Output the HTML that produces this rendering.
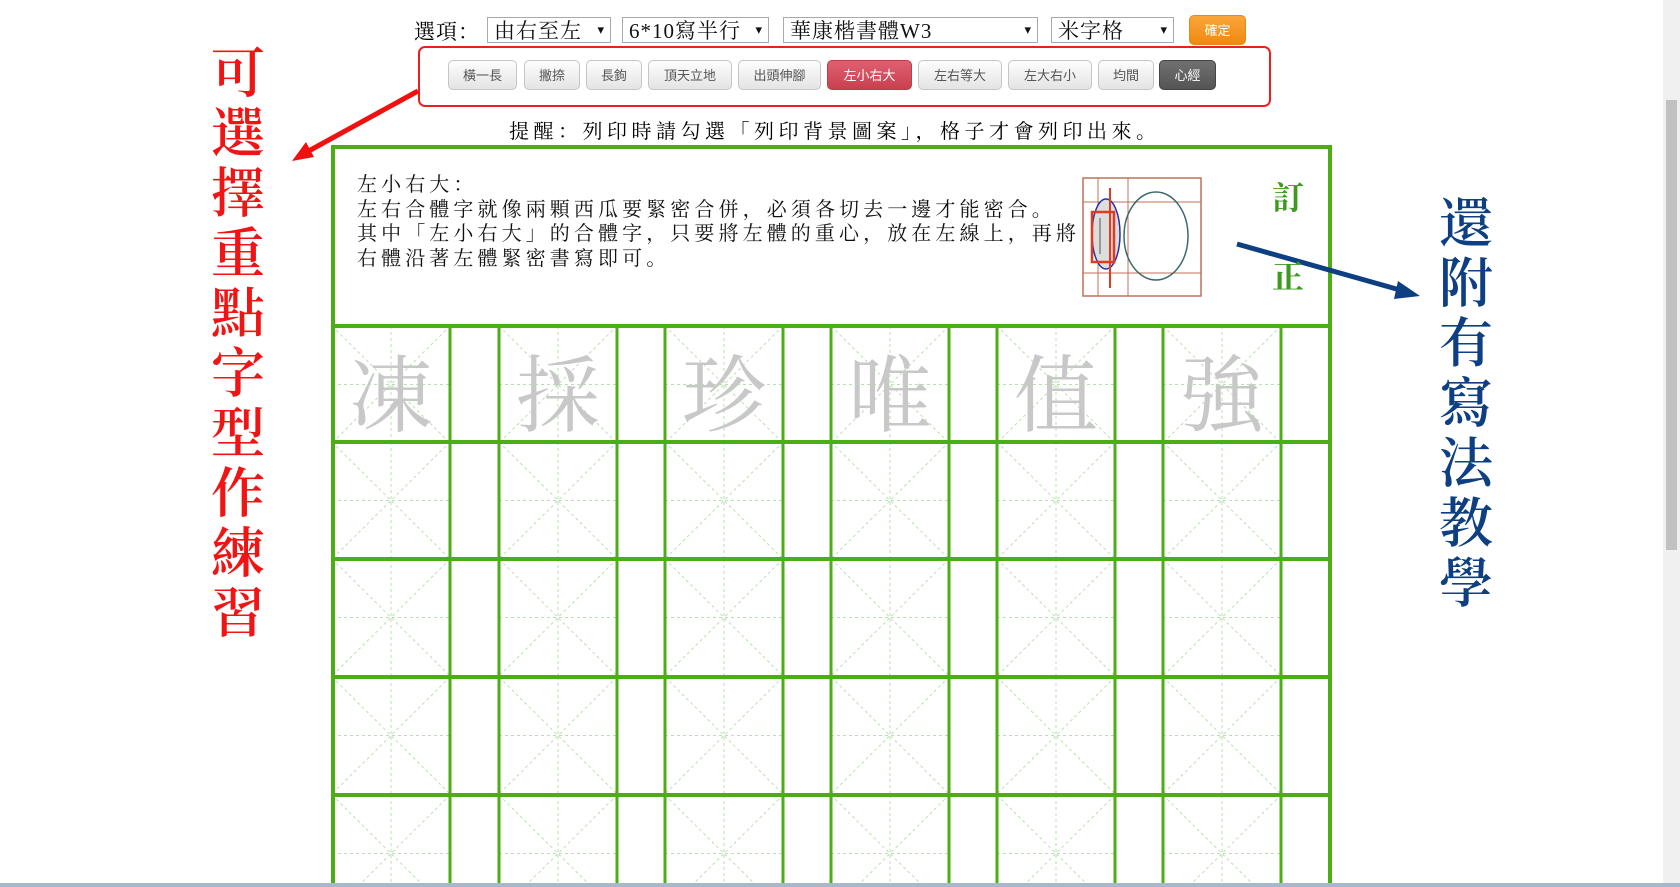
<!DOCTYPE html>
<html><head><meta charset="utf-8"><style>
html,body{margin:0;padding:0;background:#fff;width:1680px;height:887px;overflow:hidden;position:relative;font-family:"Liberation Serif","Noto Serif CJK SC",serif}
.a{position:absolute}
.sel{position:absolute;top:17px;height:26px;border:1px solid #a9a9a9;background:#fff;font-size:21px;line-height:26px;padding-left:6px;box-sizing:border-box;color:#111;letter-spacing:1px}
.sel:after{content:"▾";position:absolute;right:5px;top:0;font-size:13px;font-family:"DejaVu Sans",sans-serif}
.btn{position:absolute;top:60px;height:30px;border:1px solid #c6c6c6;border-radius:5px;background:linear-gradient(#fdfdfd,#e4e4e4);font-family:"Liberation Sans","Noto Sans CJK TC",sans-serif;font-size:13px;color:#555;text-align:center;line-height:29px;box-sizing:border-box}
.vt{position:absolute;width:70px;text-align:center;font-size:54px;line-height:60px;font-family:"Noto Serif CJK SC",serif;font-weight:600}
.info{font-size:20px;letter-spacing:4.1px;line-height:24.5px;color:#111}
.ch{position:absolute;top:340px;width:118px;text-align:center;font-size:84px;line-height:100px;color:#c8c8c8;font-family:"Noto Serif CJK SC",serif}
</style></head><body>
<div class="a" style="left:414px;top:16px;font-size:21px;letter-spacing:1px">選項：</div>
<div class="sel" style="left:487px;width:124px">由右至左</div>
<div class="sel" style="left:622px;width:147px">6*10寫半行</div>
<div class="sel" style="left:783px;width:255px">華康楷書體W3</div>
<div class="sel" style="left:1051px;width:123px">米字格</div>
<div class="a" style="left:1189px;top:15px;width:57px;height:30px;border-radius:5px;background:linear-gradient(#fba63a,#f08a10);border:1px solid #e58a1a;color:#fff;font-family:'Liberation Sans','Noto Sans CJK TC',sans-serif;font-size:13px;text-align:center;line-height:30px;box-sizing:border-box">確定</div>
<div class="a" style="left:418px;top:46px;width:853px;height:61px;border:2px solid #e82020;border-radius:7px;box-sizing:border-box"></div>
<div class="btn" style="left:448px;width:69px">橫一長</div>
<div class="btn" style="left:524px;width:56px">撇捺</div>
<div class="btn" style="left:586px;width:56px">長鉤</div>
<div class="btn" style="left:648px;width:84px">頂天立地</div>
<div class="btn" style="left:738px;width:83px">出頭伸腳</div>
<div class="btn" style="left:827px;width:85px;background:linear-gradient(#e06070,#c9404f);border-color:#b8404c;color:#fff">左小右大</div>
<div class="btn" style="left:918px;width:84px">左右等大</div>
<div class="btn" style="left:1008px;width:84px">左大右小</div>
<div class="btn" style="left:1098px;width:56px">均間</div>
<div class="btn" style="left:1159px;width:57px;background:linear-gradient(#707070,#555);border-color:#444;color:#fff">心經</div>
<div class="a" style="left:509px;top:115px;font-size:20px;letter-spacing:4.5px;white-space:nowrap">提醒：列印時請勾選「列印背景圖案」，格子才會列印出來。</div>

<svg class="a" style="left:0;top:0" width="1680" height="887">
<defs>
<g id="mi" stroke="#b8e0b0" stroke-width="1" stroke-dasharray="3,3" fill="none">
<line x1="0" y1="0" x2="118" y2="117"/><line x1="118" y1="0" x2="0" y2="117"/>
<line x1="59" y1="0" x2="59" y2="117"/><line x1="0" y1="58.5" x2="118" y2="58.5"/>
</g>
</defs>
<g>
<use href="#mi" x="332" y="326"/><use href="#mi" x="499" y="326"/><use href="#mi" x="665" y="326"/><use href="#mi" x="831" y="326"/><use href="#mi" x="997" y="326"/><use href="#mi" x="1163" y="326"/>
<use href="#mi" x="332" y="442"/><use href="#mi" x="499" y="442"/><use href="#mi" x="665" y="442"/><use href="#mi" x="831" y="442"/><use href="#mi" x="997" y="442"/><use href="#mi" x="1163" y="442"/>
<use href="#mi" x="332" y="559"/><use href="#mi" x="499" y="559"/><use href="#mi" x="665" y="559"/><use href="#mi" x="831" y="559"/><use href="#mi" x="997" y="559"/><use href="#mi" x="1163" y="559"/>
<use href="#mi" x="332" y="677"/><use href="#mi" x="499" y="677"/><use href="#mi" x="665" y="677"/><use href="#mi" x="831" y="677"/><use href="#mi" x="997" y="677"/><use href="#mi" x="1163" y="677"/>
<use href="#mi" x="332" y="795"/><use href="#mi" x="499" y="795"/><use href="#mi" x="665" y="795"/><use href="#mi" x="831" y="795"/><use href="#mi" x="997" y="795"/><use href="#mi" x="1163" y="795"/>
</g>
<g stroke="#4cae14" fill="none">
<rect x="333" y="147" width="997" height="760" stroke-width="4"/>
<g stroke-width="4"><line x1="331" y1="326" x2="1332" y2="326"/><line x1="331" y1="442" x2="1332" y2="442"/><line x1="331" y1="559" x2="1332" y2="559"/><line x1="331" y1="677" x2="1332" y2="677"/><line x1="331" y1="795" x2="1332" y2="795"/></g>
<g stroke-width="3">
<line x1="450" y1="326" x2="450" y2="887"/><line x1="499" y1="326" x2="499" y2="887"/>
<line x1="617" y1="326" x2="617" y2="887"/><line x1="665" y1="326" x2="665" y2="887"/>
<line x1="783" y1="326" x2="783" y2="887"/><line x1="831" y1="326" x2="831" y2="887"/>
<line x1="949" y1="326" x2="949" y2="887"/><line x1="997" y1="326" x2="997" y2="887"/>
<line x1="1115" y1="326" x2="1115" y2="887"/><line x1="1163" y1="326" x2="1163" y2="887"/>
<line x1="1281" y1="326" x2="1281" y2="887"/>
</g></g>
<g transform="translate(1083,178)">
<rect x="0" y="0" width="118" height="118" fill="#fff" stroke="#c0705a" stroke-width="1.5"/>
<g stroke="#c0705a" stroke-width="1"><line x1="15" y1="0" x2="15" y2="118"/><line x1="45" y1="0" x2="45" y2="118"/><line x1="0" y1="24" x2="118" y2="24"/><line x1="0" y1="95" x2="118" y2="95"/></g>
<ellipse cx="73" cy="58" rx="32" ry="44" fill="none" stroke="#3a6a70" stroke-width="1.5"/>
<ellipse cx="23" cy="56" rx="14" ry="35" fill="#ddd" stroke="#2233aa" stroke-width="1.5"/>
<rect x="9" y="34" width="22" height="50" fill="none" stroke="#e03a20" stroke-width="2.5"/>
<line x1="17" y1="40" x2="17" y2="76" stroke="#555" stroke-width="1"/>
<line x1="27" y1="10" x2="27" y2="110" stroke="#e03a20" stroke-width="2"/>
</g>
<line x1="418" y1="91" x2="305" y2="153" stroke="#f01010" stroke-width="5"/>
<path d="M292,161 L306,142 L314,157z" fill="#f01010"/>
<line x1="1237" y1="244" x2="1400" y2="290" stroke="#0d3f82" stroke-width="5"/>
<path d="M1420,296 L1398,281 L1394,299z" fill="#0d3f82"/>
<rect x="1663" y="0" width="17" height="887" fill="#f0f0f0"/>
<rect x="1666" y="100" width="11" height="450" fill="#c1c1c1"/>
<rect x="0" y="883" width="1680" height="4" fill="#a8b8cc"/>
</svg>

<div class="a info" style="left:357px;top:173px">左小右大：<br>左右合體字就像兩顆西瓜要緊密合併，必須各切去一邊才能密合。<br>其中「左小右大」的合體字，只要將左體的重心，放在左線上，再將<br>右體沿著左體緊密書寫即可。</div>
<div class="a" style="left:1272px;top:173px;font-size:32px;color:#3c9a1c;font-family:'Noto Serif CJK SC',serif;font-weight:bold">訂</div>
<div class="a" style="left:1272px;top:252px;font-size:32px;color:#3c9a1c;font-family:'Noto Serif CJK SC',serif;font-weight:bold">正</div>

<div class="ch" style="left:332px">凍</div>
<div class="ch" style="left:499px">採</div>
<div class="ch" style="left:665px">珍</div>
<div class="ch" style="left:831px">唯</div>
<div class="ch" style="left:997px">值</div>
<div class="ch" style="left:1163px">強</div>

<div class="vt" style="left:203px;top:40px;color:#f01414">可<br>選<br>擇<br>重<br>點<br>字<br>型<br>作<br>練<br>習</div>
<div class="vt" style="left:1431px;top:190px;color:#0d3f82">還<br>附<br>有<br>寫<br>法<br>教<br>學</div>
</body></html>
